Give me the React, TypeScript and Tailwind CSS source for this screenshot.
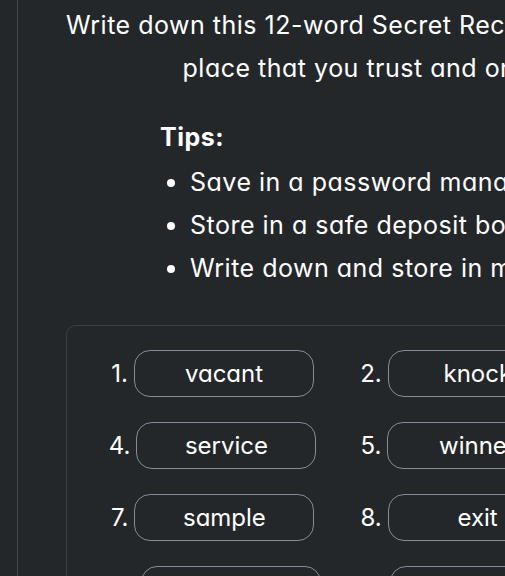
const words = [
  "vacant", "knock", "daring",
  "service", "winner", "orbit",
  "sample", "exit", "lumber",
  "fossil", "garden", "humble",
];

const tips = [
  "Save in a password manager",
  "Store in a safe deposit box",
  "Write down and store in multiple secret places",
];

export default function App() {
  return (
    <div className="h-[576px] w-[505px] overflow-hidden bg-[#24272a] text-white font-['Inter',sans-serif] [font-feature-settings:'cv11']">
      <div className="flex h-full w-[1000px] pl-[17px]">
        <div className="h-full border-l border-[#43484f] pl-[48px]">
          <div className="w-[796px]">
            <p className="pt-[4px] text-center text-[25px] leading-[43px] tracking-[0.02em] whitespace-nowrap">
              Write down this 12-word Secret Recovery Phrase and save it in a
              <br />
              place that you trust and only you can access.
            </p>

            <div className="ml-[94px] mt-[26px] text-[25px] leading-[43px] tracking-[0.02em]">
              <p className="font-bold">Tips:</p>
              <ul className="mt-[2px] list-disc pl-[30px] whitespace-nowrap">
                {tips.map((t) => (
                  <li key={t}>{t}</li>
                ))}
              </ul>
            </div>

            <div className="mt-[35px] rounded-[10px] border border-[#3b4046] px-[20px] pt-[24px] pb-[24px]">
              <div className="grid grid-cols-3 gap-y-[25px]">
                {words.map((w, i) => (
                  <div key={i} className="flex items-center justify-center gap-[6px]">
                    <span className="text-[24px]">{i + 1}.</span>
                    <span className="flex h-[47px] w-[180px] items-center justify-center rounded-[16px] border border-[#848c96] text-[24px]">
                      {w}
                    </span>
                  </div>
                ))}
              </div>
            </div>
          </div>
        </div>
      </div>
    </div>
  );
}
